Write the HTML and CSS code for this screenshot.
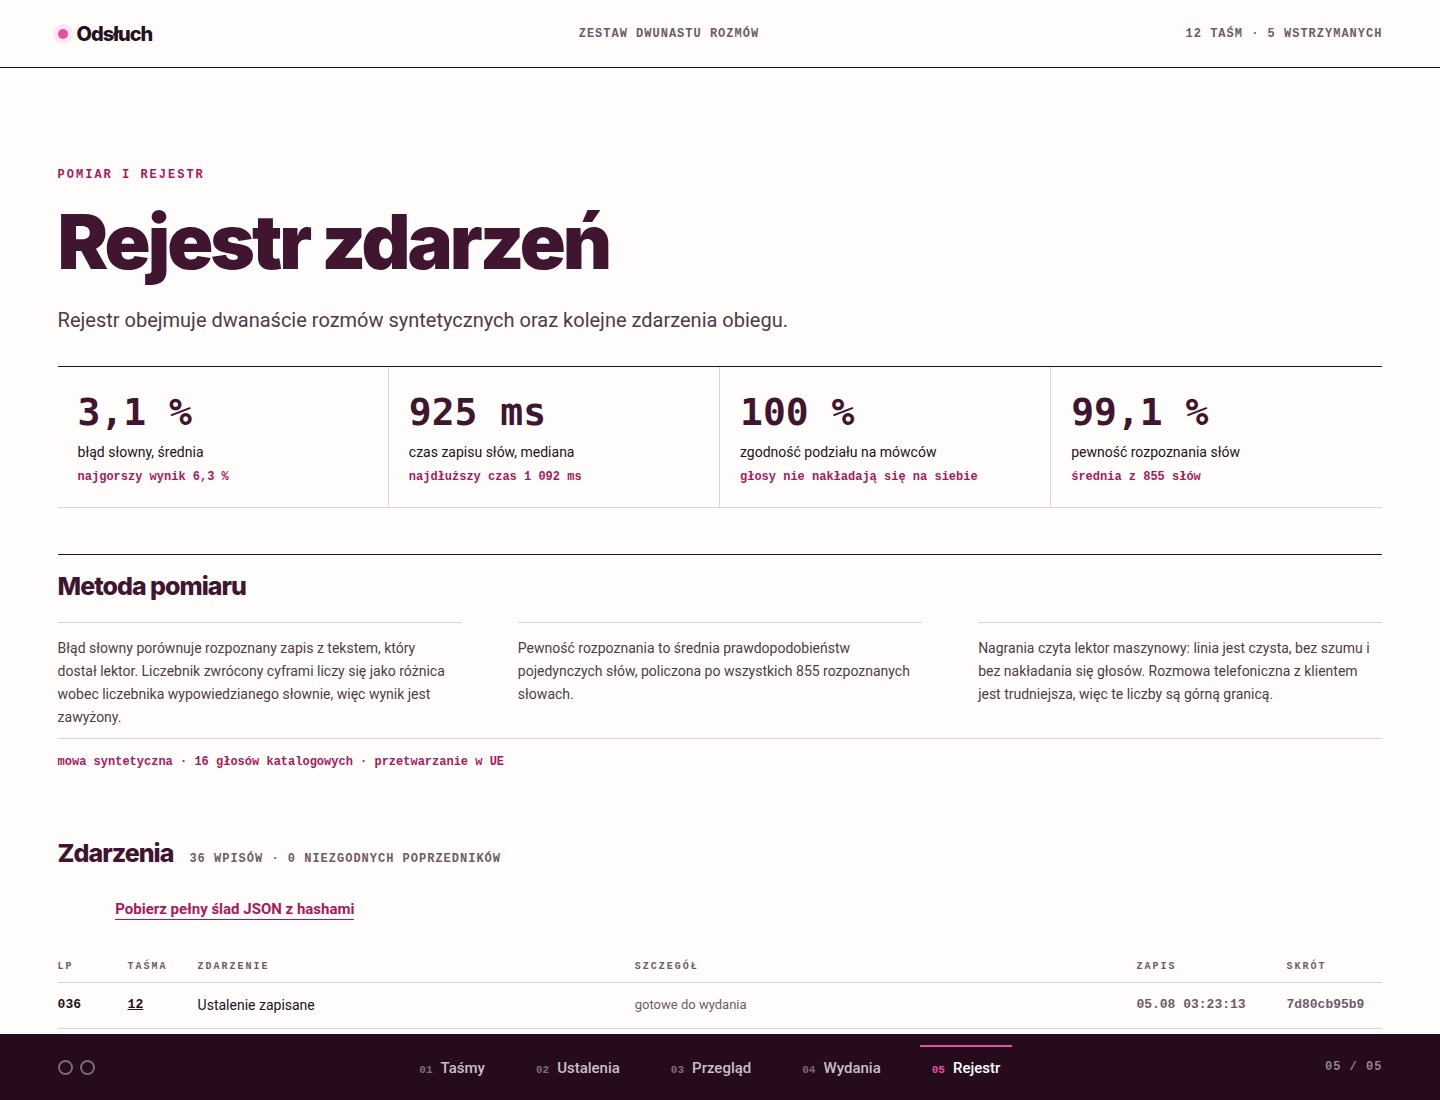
FILE: index.html
```
<!DOCTYPE html>
<html lang="pl">
<head>
    <meta charset="UTF-8">
    <meta name="viewport" content="width=device-width, initial-scale=1.0">
    <title>Odsłuch</title>
    <link rel="stylesheet" href="styles.css">
</head>
<body>

<header class="topbar">
    <a class="brand" href="#"><span class="brand-dot"></span>Odsłuch</a>
    <span class="label">Zestaw dwunastu rozmów</span>
    <span class="label">12 taśm · 5 wstrzymanych</span>
</header>

<main class="page">
    <p class="kicker">Pomiar i rejestr</p>
    <h1>Rejestr zdarzeń</h1>
    <p class="lead">Rejestr obejmuje dwanaście rozmów syntetycznych oraz kolejne zdarzenia obiegu.</p>

    <section class="stats">
        <div class="stat">
            <div class="stat-value">3,1 %</div>
            <div class="stat-name">błąd słowny, średnia</div>
            <div class="note">najgorszy wynik 6,3 %</div>
        </div>
        <div class="stat">
            <div class="stat-value">925 ms</div>
            <div class="stat-name">czas zapisu słów, mediana</div>
            <div class="note">najdłuższy czas 1 092 ms</div>
        </div>
        <div class="stat">
            <div class="stat-value">100 %</div>
            <div class="stat-name">zgodność podziału na mówców</div>
            <div class="note">głosy nie nakładają się na siebie</div>
        </div>
        <div class="stat">
            <div class="stat-value">99,1 %</div>
            <div class="stat-name">pewność rozpoznania słów</div>
            <div class="note">średnia z 855 słów</div>
        </div>
    </section>

    <section class="method">
        <h2>Metoda pomiaru</h2>
        <div class="method-columns">
            <p>Błąd słowny porównuje rozpoznany zapis z tekstem, który dostał lektor. Liczebnik zwrócony cyframi liczy się jako różnica wobec liczebnika wypowiedzianego słownie, więc wynik jest zawyżony.</p>
            <p>Pewność rozpoznania to średnia prawdopodobieństw pojedynczych słów, policzona po wszystkich 855 rozpoznanych słowach.</p>
            <p>Nagrania czyta lektor maszynowy: linia jest czysta, bez szumu i bez nakładania się głosów. Rozmowa telefoniczna z klientem jest trudniejsza, więc te liczby są górną granicą.</p>
        </div>
        <p class="note method-note">mowa syntetyczna · 16 głosów katalogowych · przetwarzanie w UE</p>
    </section>

    <section class="events">
        <div class="events-head">
            <h2>Zdarzenia</h2>
            <span class="label">36 wpisów · 0 niezgodnych poprzedników</span>
        </div>
        <a class="download" href="#">Pobierz pełny ślad JSON z hashami</a>

        <table class="log">
            <thead>
                <tr>
                    <th class="col-lp">Lp</th>
                    <th class="col-tape">Taśma</th>
                    <th class="col-event">Zdarzenie</th>
                    <th>Szczegół</th>
                    <th class="col-time">Zapis</th>
                    <th class="col-hash">Skrót</th>
                </tr>
            </thead>
            <tbody>
                <tr>
                    <td class="mono">036</td>
                    <td class="mono"><a href="#">12</a></td>
                    <td>Ustalenie zapisane</td>
                    <td class="detail">gotowe do wydania</td>
                    <td class="mono muted">05.08 03:23:13</td>
                    <td class="mono muted">7d80cb95b9</td>
                </tr>
            </tbody>
        </table>
    </section>
</main>

<footer class="deck">
    <div class="reels"><span></span><span></span></div>
    <nav class="deck-nav">
        <a href="#"><span class="num">01</span>Taśmy</a>
        <a href="#"><span class="num">02</span>Ustalenia</a>
        <a href="#"><span class="num">03</span>Przegląd</a>
        <a href="#"><span class="num">04</span>Wydania</a>
        <a class="active" href="#"><span class="num">05</span>Rejestr</a>
    </nav>
    <span class="label counter">05 / 05</span>
</footer>

</body>
</html>
```
FILE: styles.css
```
:root {
    --paper: #fffdfc;
    --ink: #241020;
    --plum: #40152f;
    --text: #4f3a47;
    --muted: #6f5a68;
    --rule: #dfd3da;
    --crimson: #a8195b;
    --pink: #de559d;
    --deck: #260b1c;
    --gutter: 4vw;
    --sans: Roboto, "Liberation Sans", sans-serif;
    --display: Inter, "Liberation Sans", sans-serif;
    --mono: "Liberation Mono", monospace;
}

* {
    box-sizing: border-box;
}

body {
    margin: 0;
    background-color: var(--paper);
    color: var(--ink);
    font-family: var(--sans);
    font-size: 14px;
    line-height: 20px;
}

h1, h2, p {
    margin: 0;
}

h1, h2 {
    font-family: var(--display);
    font-weight: 800;
    color: var(--plum);
}

h1 {
    margin-top: 16px;
    font-size: 76px;
    font-weight: 900;
    line-height: 80px;
    letter-spacing: -3px;
}

h2 {
    font-size: 25px;
    line-height: 32px;
    letter-spacing: -1px;
}

a {
    color: inherit;
}

/* header */
.topbar {
    display: flex;
    justify-content: space-between;
    align-items: center;
    height: 68px;
    padding: 0 var(--gutter);
    border-bottom: 1px solid var(--ink);
}

.brand {
    display: flex;
    align-items: center;
    gap: 9px;
    font-family: var(--display);
    font-size: 20px;
    font-weight: 800;
    letter-spacing: -1px;
    text-decoration: none;
}

.brand-dot {
    width: 10px;
    height: 10px;
    border-radius: 50%;
    background-color: var(--pink);
    box-shadow: 0 0 0 5px #fce8f1;
}

.label {
    font-family: var(--mono);
    font-size: 12px;
    font-weight: bold;
    letter-spacing: 1px;
    text-transform: uppercase;
    color: var(--muted);
}

.page {
    padding: 97px var(--gutter) 120px;
}

.kicker {
    font-family: var(--mono);
    font-size: 12px;
    font-weight: bold;
    letter-spacing: 2px;
    text-transform: uppercase;
    color: var(--crimson);
}

.lead {
    margin-top: 24px;
    font-size: 20px;
    line-height: 30px;
    color: var(--text);
}

.note {
    font-family: var(--mono);
    font-size: 12px;
    font-weight: bold;
    color: var(--crimson);
}

/* stats */
.stats {
    display: grid;
    grid-template-columns: repeat(4, 1fr);
    margin-top: 31px;
    border-top: 1px solid var(--ink);
    border-bottom: 1px solid var(--rule);
}

.stat {
    padding: 25px 20px 20px;
    border-right: 1px solid var(--rule);
}

.stat:last-child {
    border-right: none;
}

.stat-value {
    font-family: "DejaVu Sans Mono", monospace;
    font-size: 38px;
    font-weight: bold;
    line-height: 40px;
    color: var(--plum);
}

.stat-name {
    margin: 10px 0 5px;
}

/* method */
.method {
    margin-top: 46px;
    padding-top: 15px;
    border-top: 1px solid var(--ink);
}

.method-columns {
    display: grid;
    grid-template-columns: repeat(3, 1fr);
    gap: 56px;
    margin-top: 20px;
    line-height: 23px;
    color: var(--text);
}

.method-columns p {
    padding: 14px 8px 9px 0;
    border-top: 1px solid var(--rule);
}

.method-note {
    padding-top: 13px;
    border-top: 1px solid var(--rule);
}

/* events */
.events {
    margin-top: 65px;
}

.events-head {
    display: flex;
    align-items: baseline;
    gap: 16px;
}

.download {
    display: inline-block;
    margin: 31px 0 0 var(--gutter);
    border-bottom: 1px solid var(--crimson);
    font-size: 15px;
    font-weight: bold;
    line-height: 19px;
    text-decoration: none;
    color: var(--crimson);
}

.log {
    width: 100%;
    margin-top: 32px;
    border-collapse: collapse;
    table-layout: fixed;
}

.log th, .log td {
    padding: 0;
    border-bottom: 1px solid var(--rule);
    text-align: left;
}

.log th {
    height: 30px;
    font-family: var(--mono);
    font-size: 10px;
    letter-spacing: 2px;
    text-transform: uppercase;
    color: var(--muted);
}

.log td {
    height: 46px;
}

.col-lp, .col-tape {
    width: 70px;
}

.col-event {
    width: 33%;
}

.col-time {
    width: 150px;
}

.col-hash {
    width: 96px;
}

.log .mono {
    font-family: var(--mono);
    font-size: 13px;
    font-weight: bold;
}

.log .muted, .log .detail {
    color: var(--muted);
}

.log .detail {
    font-size: 13px;
}

/* bottom bar */
.deck {
    position: fixed;
    left: 0;
    right: 0;
    bottom: 0;
    display: flex;
    justify-content: space-between;
    align-items: center;
    height: 66px;
    padding: 0 var(--gutter);
    background-color: var(--deck);
}

.reels {
    display: flex;
    gap: 7px;
}

.reels span {
    width: 15px;
    height: 15px;
    border: 2px solid #7d6b76;
    border-radius: 50%;
}

.deck-nav {
    display: flex;
    gap: 27px;
}

.deck-nav a {
    display: flex;
    align-items: baseline;
    gap: 8px;
    padding: 11px 12px 9px;
    border-top: 2px solid transparent;
    font-size: 15px;
    font-weight: 500;
    text-decoration: none;
    color: #c9bfc5;
}

.deck-nav .num {
    font-family: var(--mono);
    font-size: 11px;
    font-weight: bold;
    color: #7d6b76;
}

.deck-nav .active {
    border-top-color: var(--pink);
    color: #fff;
}

.deck-nav .active .num {
    color: var(--pink);
}

.counter {
    color: #92838c;
}
```
